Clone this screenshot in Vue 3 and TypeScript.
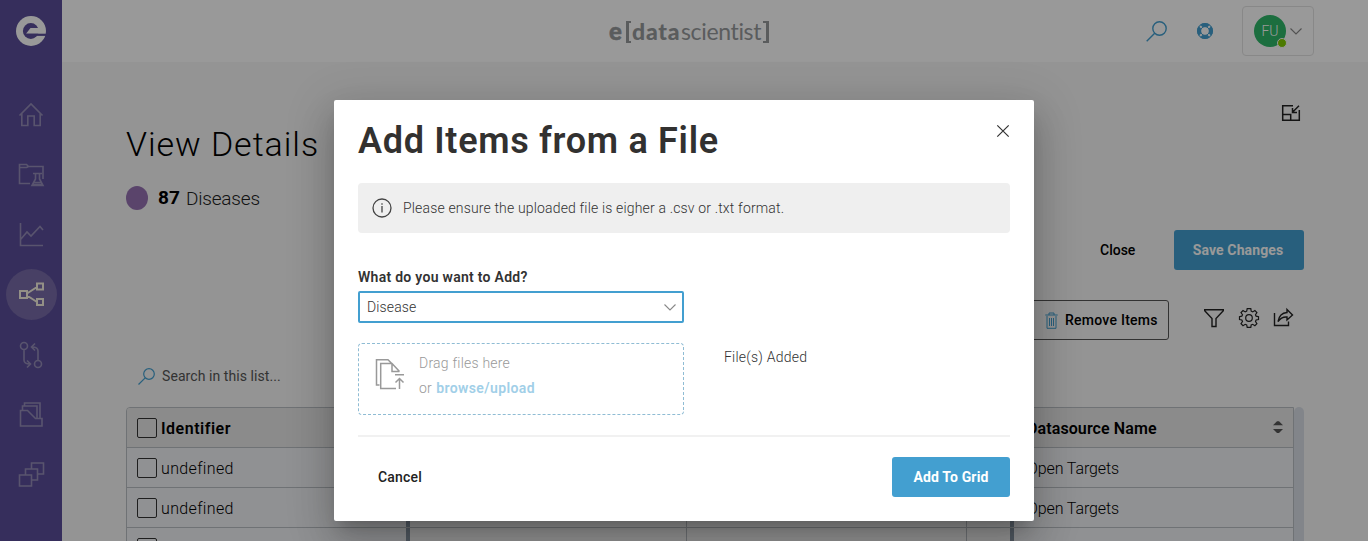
<script setup lang="ts">
import { ref } from 'vue'

interface NavItem {
  name: string
  d: string
  active?: boolean
}

const navItems: NavItem[] = [
  { name: 'Home', d: 'M2.500 14.500 14 3 25.500 14.500M4.800 12.500v12h6v-9.500h6.400v9.500h6v-12' },
  { name: 'Experiments', d: 'M13 22.500H2.500V3.500h7l2 2H26V18M2.500 6.500h7l2-1M16 12.500h9M18.500 13v5l-3.500 6.500h11L22.500 18v-5M16.500 21.500h8M15.500 23.500h10' },
  { name: 'Analytics', d: 'M3.500 2v22.500H26M4 18l6-7 4 4 9-9.500 3 3.500' },
  { name: 'Network', d: 'M3 10h7v7H3zM20 2.500h6v6h-6zM20 18h6v6h-6zM10 12.500l10-6.500M10 14.500l10 6.500', active: true },
  { name: 'Compare', d: 'M7 8.500V19q0 4 6 4M10 19.500l3.500 3.500L10 26.500M21 19.500V10q0-4-6-4M18 2.500 14.500 6l3.500 3.500M10.500 5a3.500 3.500 0 1 1-7 0 3.500 3.500 0 0 1 7 0M24.500 23a3.500 3.500 0 1 1-7 0 3.500 3.500 0 0 1 7 0' },
  { name: 'Library', d: 'M3.500 9.500h7l8 8h6.500v7.500H3.500zM5.500 9V5H20v12.500M7.500 5V2h15.500v15' },
  { name: 'Collections', d: 'M2.500 14h12v11h-12zM8.500 13.500V8h12v11H15M14.500 7.500V2h12v11H21' },
]

const rows = [
  { identifier: 'undefined', source: 'Open Targets' },
  { identifier: 'undefined', source: 'Open Targets' },
  { identifier: '', source: '' },
]

const selected = ref('Disease')
</script>

<template>
  <div class="app">
    <nav class="sidebar">
      <svg class="brand" viewBox="0 0 30 30">
        <circle cx="15" cy="15" r="15" fill="#fff" />
        <circle cx="14.800" cy="15" r="7.900" fill="#5a4e99" />
        <path d="M10 17.800 14.500 12H24l4 5.800z" fill="#fff" />
        <path d="M10 17.700H30v2.200H10z" fill="#5a4e99" />
      </svg>
      <div v-for="item in navItems" :key="item.name" class="nav-item" :class="{ active: item.active }">
        <svg viewBox="0 0 28 28"><path :d="item.d" /></svg>
      </div>
    </nav>

    <div class="page">
      <header class="header">
        <div class="wordmark">
          <span class="wm-e">e</span><span class="wm-bracket left"></span><span class="wm-data">data</span><span class="wm-sci">scientist</span><span class="wm-bracket right"></span>
        </div>
        <div class="header-tools">
          <svg class="h-search" viewBox="0 0 21 21"><circle cx="13.500" cy="7.500" r="6.700" /><path d="m8.700 12.300-8 8" /></svg>
          <svg class="h-help" viewBox="0 0 16 16">
            <circle cx="8" cy="8" r="6" fill="none" stroke="#439fd0" stroke-width="4" />
            <path d="m2.500 2.500 3.300 3.300M13.500 2.500l-3.300 3.300M2.500 13.500l3.300-3.300M13.500 13.500l-3.300-3.300" stroke="#fff" stroke-width="2" />
            <circle cx="8" cy="8" r="4.400" fill="none" stroke="#439fd0" />
            <circle cx="8" cy="8" r="7.500" fill="none" stroke="#439fd0" />
          </svg>
          <div class="profile">
            <div class="avatar">FU<i class="status"></i></div>
            <svg class="chevron" viewBox="0 0 12 7"><path d="m.5.500 5.500 5.500L11.500.500" /></svg>
          </div>
        </div>
      </header>

      <main class="content">
        <div class="minimize">
          <svg viewBox="0 0 18 16"><path d="M11 .7H.7v14.600h16.600V5M.7 9.500h8v5.500M17 .7l-6.500 6.500M10.500 3v4.500H15" /></svg>
        </div>
        <h1 class="page-title">View Details</h1>
        <div class="count"><i class="dot"></i><b>87</b><span>Diseases</span></div>
        <div class="actions">
          <span class="close-link">Close</span>
          <button class="primary save">Save Changes</button>
        </div>
        <div class="toolbar">
          <button class="remove">
            <svg viewBox="0 0 13 17"><path d="M2 4v12.300h9V4M.3 3h12.400M4 3V1h5v2M4.500 6v8M6.500 6v8M8.500 6v8" /></svg>
            <span>Remove Items</span>
          </button>
          <svg class="tool" viewBox="0 0 20 20"><path d="M.7 1.700h18.600v1L12 10.500v8H8v-8L.7 2.700z" /></svg>
          <svg class="tool gear" viewBox="0 0 20 20">
            <path d="M8.200.700h3.600l.4 2.500 1.500.7 2.200-1.400 2 2-1.400 2.200.6 1.500 2.400.5v2.800l-2.400.5-.6 1.500 1.400 2.200-2 2-2.200-1.400-1.500.6-.4 2.400H8.200l-.5-2.400-1.500-.6L4 17.700l-2-2 1.500-2.200-.7-1.500-2.300-.5V8.700l2.300-.5.7-1.500L2 4.500l2-2 2.200 1.400 1.500-.7z" />
            <circle cx="10" cy="10" r="3.300" />
          </svg>
          <svg class="tool" viewBox="0 0 20 20"><path d="M.5 5v12.500h14v-4M13 1.500 18.500 7 13 12V9Q7.500 8.500 4 13.500 5.500 5 13 4.500z" /></svg>
        </div>
        <div class="search">
          <svg viewBox="0 0 17 17"><circle cx="11" cy="6" r="5.300" /><path d="M7.200 9.800.500 16.500" /></svg>
          <span>Search in this list...</span>
        </div>
        <div class="grid-wrap">
          <div class="grid">
            <div class="row head">
              <div class="cell first"><i class="check"></i><span class="t-id">Identifier</span></div>
              <div class="cell"></div><div class="cell"></div><div class="cell"></div>
              <div class="cell last">
                <span class="t-ds">Datasource Name</span>
                <svg viewBox="0 0 10 12"><path d="M0 4.200 4 .300h2l4 3.900zM0 8l4 3.900h2L10 8z" /></svg>
              </div>
            </div>
            <div v-for="(row, i) in rows" :key="i" class="row">
              <div class="cell first"><i class="check"></i><span class="t-un">{{ row.identifier }}</span></div>
              <div class="cell"></div><div class="cell"></div><div class="cell"></div>
              <div class="cell last"><span class="t-ot">{{ row.source }}</span></div>
            </div>
          </div>
          <div class="scrollbar"></div>
        </div>
      </main>
    </div>

    <div class="backdrop">
      <section class="modal">
        <div class="modal-head">
          <h2>Add Items from a File</h2>
          <svg viewBox="0 0 12 12"><path d="m.3.300 11.400 11.400M11.700.300.300 11.700" /></svg>
        </div>
        <div class="notice">
          <svg viewBox="0 0 20 20"><circle cx="10" cy="10" r="9" /><path d="M10 8v6.500M10 5.200v1.600" /></svg>
          <span>Please ensure the uploaded file is eigher a .csv or .txt format.</span>
        </div>
        <label class="field-label"><span>What do you want to Add?</span></label>
        <div class="select">
          <span>{{ selected }}</span>
          <svg class="chevron" viewBox="0 0 12 7"><path d="m.5.500 5.500 5.500L11.500.500" /></svg>
        </div>
        <div class="upload">
          <div class="dropzone">
            <svg viewBox="0 0 30 32"><path d="M4.500 26H1.500V.7h11.500l4 4M21 29.500H5.700V4.500H17l7.500 8M17 4.500v8h7.500M20 15.700h9M24.500 30V19.500M20.500 23.500l4-4 4 4" /></svg>
            <div class="drop-text">
              <div class="drag">Drag files here</div>
              <div class="or">or <b>browse/upload</b></div>
            </div>
          </div>
          <div class="added">File(s) Added</div>
        </div>
        <div class="modal-foot">
          <span class="cancel">Cancel</span>
          <button class="primary add">Add To Grid</button>
        </div>
      </section>
    </div>
  </div>
</template>

<style>
html, body { overflow: hidden; }
</style>

<style scoped>
* { box-sizing: border-box; }
.app {
  position: relative; display: flex; width: 1368px; height: 541px; overflow: hidden;
  background: #f7f7f7; color: #000; white-space: nowrap;
  font: 14px/20px Roboto, "Liberation Sans", sans-serif;
}
svg { display: block; flex: none; fill: none; overflow: visible; }
button { font: inherit; padding: 0; border: 0; background: none; }
.sidebar { width: 62px; flex: none; background: #5a4e99; display: flex; flex-direction: column; align-items: center; }
.brand { width: 30px; height: 30px; margin: 16px 0 43px; }
.nav-item { width: 51px; height: 51px; margin-bottom: 9px; display: grid; place-items: center; border-radius: 50%; flex: none; }
.nav-item svg { width: 28px; height: 28px; stroke: #958db8; stroke-width: 1.6; }
.nav-item.active { background: #786ba8; }
.nav-item.active svg { stroke: #f5f1df; stroke-width: 2; }
.page { flex: 1; min-width: 0; }
.header { height: 62px; background: #fff; display: flex; justify-content: space-between; padding: 0 54px 0 547px; }
.wordmark { display: flex; align-items: center; height: 62px; color: #96999c; font: 23px/30px Lato, sans-serif; }
.wm-e { width: 17px; font-weight: 900; font-size: 24px; -webkit-text-stroke: .5px #96999c; }
.wm-data { width: 50px; padding-left: 1px; font-weight: 900; letter-spacing: .8px; }
.wm-sci { width: 82px; font-weight: 400; letter-spacing: -.35px; }
.wm-bracket { width: 6px; height: 22px; border: 2px solid #96999c; border-width: 2px 3px; margin-top: 2px; }
.wm-bracket.left { width: 5px; border-right: 0; }
.wm-bracket.right { border-left: 0; }
.header-tools { display: flex; align-items: center; }
.h-search { width: 21px; height: 21px; stroke: #439fd0; stroke-width: 1.4; margin-right: 30px; }
.h-help { width: 16px; height: 16px; margin-right: 29px; }
.profile { width: 72px; height: 50px; border: 1px solid #e3e3e3; border-radius: 4px; display: flex; align-items: center; padding-left: 11px; }
.avatar { position: relative; width: 32px; height: 32px; border-radius: 50%; background: #2fb869; color: #fff; font-size: 14px; line-height: 32px; text-align: center; margin-right: 4px; font-weight: 300; }
.status { position: absolute; right: -1px; bottom: -1px; width: 10px; height: 10px; border-radius: 50%; background: #7fcb00; border: 1px solid #fff; }
.chevron { width: 12px; height: 7px; stroke: #888; stroke-width: 1.1; }
.content { padding: 43px 64px 0; }
.minimize { display: flex; justify-content: flex-end; height: 17px; padding-right: 4px; }
.minimize svg { width: 18px; height: 16px; stroke: #222; stroke-width: 1.5; }
.page-title { margin: 0; height: 44px; font-size: 34px; line-height: 44px; font-weight: 300; letter-spacing: .95px; }
.count { display: flex; align-items: center; height: 64px; font-size: 19px; }
.dot { width: 22px; height: 24px; border-radius: 50%; background: #9672b2; margin-right: 10px; }
.count b { width: 28px; font-weight: 700; }
.count span { font-weight: 300; letter-spacing: -.2px; color: #222; padding-top: 1px; }
.actions { display: flex; align-items: center; justify-content: flex-end; height: 40px; }
.close-link { width: 74px; font-weight: 500; letter-spacing: 0; }
.primary { height: 40px; background: #439fd0; color: #fff; border-radius: 3px; font-weight: 700; }
.save { width: 130px; padding-right: 2px; letter-spacing: .12px; }
.toolbar { display: flex; align-items: center; justify-content: flex-end; height: 40px; margin-top: 30px; padding-right: 10px; }
.remove { width: 148px; height: 40px; border: 1px solid #555; border-radius: 3px; display: flex; align-items: center; padding-left: 23px; margin-right: 35px; font-weight: 500; letter-spacing: .25px; }
.remove svg { width: 13px; height: 17px; stroke: #439fd0; margin-right: 7px; }
.tool { width: 20px; height: 20px; margin: -5px 0 0 0; stroke: #222; stroke-width: 1.4; }
.tool + .tool { margin-left: 15px; }
.gear { stroke-width: 1.2; }
.search { display: flex; align-items: center; height: 20px; margin: 26px 0 21px; padding-left: 12px; color: #555; letter-spacing: .07px; }
.search svg { width: 17px; height: 17px; margin-right: 7px; stroke: #439fd0; stroke-width: 1.2; }
.grid-wrap { display: flex; height: 200px; }
.grid { width: 1168px; border: 1px solid #b9bec3; border-radius: 4px 0 0 0; overflow: hidden; }
.row { display: grid; grid-template-columns: 283px 277px 280px 47px 279px; height: 40px; border-bottom: 1px solid #b9bec3; font-size: 16px; }
.cell { display: flex; align-items: center; border-right: 1px solid #b9bec3; }
.cell.first { background: #f0f2f5; border-right: 4px solid #8996a6; padding-left: 10px; }
.cell:nth-child(4) { border-right: 4px solid #8996a6; }
.cell.last { background: #f0f2f5; border-right: 0; justify-content: space-between; padding: 0 10px 0 13px; }
.row.head .cell { background: #e8e8e8; font-weight: 600; }
.cell.last svg { width: 10px; height: 12px; fill: #555; margin-top: -2px; }
.check { width: 20px; height: 20px; border: 1.4px solid #333; border-radius: 2px; margin-right: 4px; }
.row span { padding-top: 2px; font-weight: 350; }
.row.head span { font-weight: 600; }
.t-id { letter-spacing: .5px; }
.t-un { letter-spacing: .35px; }
.t-ds { letter-spacing: .1px; }
.t-ot { letter-spacing: -.1px; }
.scrollbar { width: 10px; background: #d9dee6; border-radius: 5px 5px 0 0; }
.backdrop { position: absolute; inset: 0; background: rgba(0, 0, 0, .4); display: flex; justify-content: center; align-items: flex-start; padding-top: 100px; }
.modal { width: 700px; height: 421px; background: #fff; border-radius: 2px; padding: 0 24px; color: #323232; box-shadow: 0 11px 15px -7px rgba(0, 0, 0, .2), 0 9px 46px 8px rgba(0, 0, 0, .12), 0 24px 38px 3px rgba(0, 0, 0, .14); }
.modal-head { display: flex; justify-content: space-between; height: 83px; padding: 19px 1px 0 0; }
.modal-head h2 { margin: 0; font-size: 36px; line-height: 44px; font-weight: 600; letter-spacing: .7px; color: #323130; }
.modal-head svg { width: 12px; height: 12px; margin-top: 6px; stroke: #333; stroke-width: 1.2; }
.notice { display: flex; align-items: center; height: 50px; background: #efefef; border-radius: 4px; padding-left: 14px; }
.notice svg { width: 20px; height: 20px; margin-right: 11px; margin-top: -1px; stroke: #444; stroke-width: 1.3; }
.notice span { font-weight: 350; letter-spacing: .16px; }
.field-label { display: block; margin-top: 34px; height: 24px; font-weight: 600; letter-spacing: .28px; }
.select { width: 326px; height: 32px; border: 2px solid #439fd0; border-radius: 2px; display: flex; align-items: center; justify-content: space-between; padding: 0 6px 0 7px; }
.select span { font-weight: 350; letter-spacing: .12px; }
.upload { display: flex; height: 114px; padding-top: 20px; border-bottom: 2px solid #f1f1f1; }
.dropzone { display: flex; width: 326px; height: 72px; border: 1px dashed #8fbcd4; border-radius: 4px; padding: 15px 0 0 16px; color: #999; }
.dropzone svg { width: 30px; height: 32px; stroke: #999; stroke-width: 1.5; margin-right: 14px; }
.drop-text { margin-top: -8px; line-height: 25px; letter-spacing: .22px; font-weight: 350; }
.or b { margin-left: .5px; font-weight: 600; letter-spacing: .4px; color: #a1cfe8; }
.added { padding: 4px 0 0 40px; letter-spacing: .23px; font-weight: 350; }
.modal-foot { display: flex; align-items: center; justify-content: space-between; height: 80px; padding-left: 20px; }
.cancel { font-weight: 500; color: #222; letter-spacing: .2px; }
.add { width: 118px; letter-spacing: .15px; }
</style>
